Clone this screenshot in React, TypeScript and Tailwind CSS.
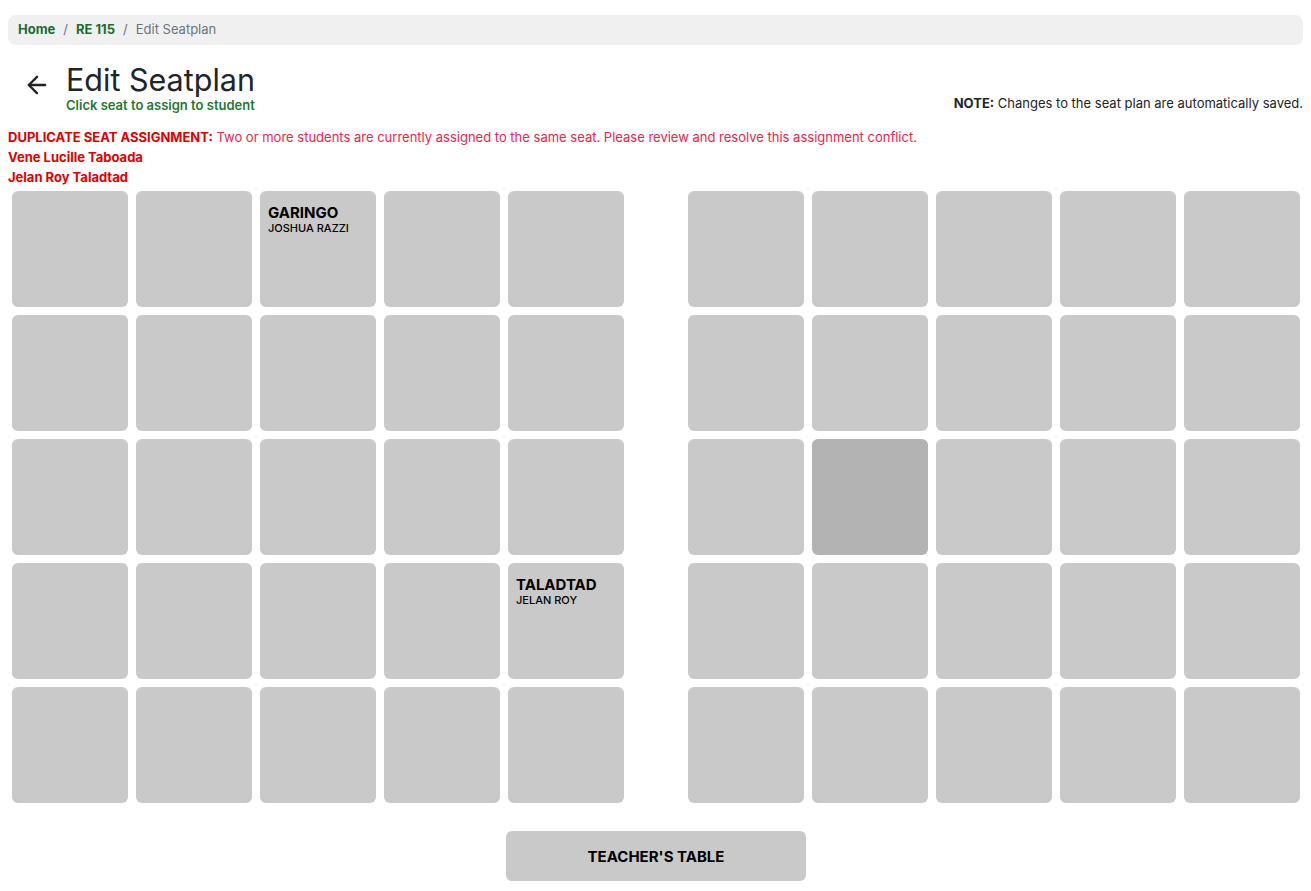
import { ArrowLeft } from "lucide-react";

type Seat = { last: string; first: string } | null;

const leftSeats: Seat[][] = [
  [null, null, { last: "GARINGO", first: "JOSHUA RAZZI" }, null, null],
  [null, null, null, null, null],
  [null, null, null, null, null],
  [null, null, null, null, { last: "TALADTAD", first: "JELAN ROY" }],
  [null, null, null, null, null],
];

const rightSeats: Seat[][] = [
  [null, null, null, null, null],
  [null, null, null, null, null],
  [null, null, null, null, null],
  [null, null, null, null, null],
  [null, null, null, null, null],
];

function SeatBox({ seat, active }: { seat: Seat; active?: boolean }) {
  return (
    <div
      className={
        "w-[116px] h-[116px] rounded-md px-2 pt-[14px] " +
        (active ? "bg-[#b3b3b3]" : "bg-[#c9c9c9]")
      }
    >
      {seat && (
        <>
          <div className="text-[15px] leading-[16px] font-bold text-black">{seat.last}</div>
          <div className="text-[11px] leading-[14px] font-medium text-black">{seat.first}</div>
        </>
      )}
    </div>
  );
}

function SeatGroup({ rows, activeAt }: { rows: Seat[][]; activeAt?: [number, number] }) {
  return (
    <div className="grid grid-cols-5 gap-2">
      {rows.map((row, r) =>
        row.map((seat, c) => (
          <SeatBox
            key={r + "-" + c}
            seat={seat}
            active={activeAt ? activeAt[0] === r && activeAt[1] === c : false}
          />
        ))
      )}
    </div>
  );
}

export default function App() {
  return (
    <div className="min-h-screen bg-white px-2 pt-[15px] font-['Inter',sans-serif] text-[#212529]">
      <nav className="h-[30px] rounded-lg bg-[#f0f0f0] px-[10px] flex items-center text-[13px]">
        <span className="font-bold text-[#1e6b2e]">Home</span>
        <span className="mx-2 text-[#6c757d]">/</span>
        <span className="font-bold text-[#1e6b2e]">RE 115</span>
        <span className="mx-2 text-[#6c757d]">/</span>
        <span className="text-[#6c757d]">Edit Seatplan</span>
      </nav>

      <div className="flex items-end justify-between mt-[18px]">
        <div className="flex items-start">
          <ArrowLeft className="w-[28px] h-[28px] ml-[15px] mt-[8px] text-[#222]" strokeWidth={2} />
          <div className="ml-[15px]">
            <h1 className="text-[30.5px] leading-[34px] font-normal text-[#212529]">Edit Seatplan</h1>
            <div className="text-[13px] leading-[16px] font-semibold text-[#1e7a2e]">
              Click seat to assign to student
            </div>
          </div>
        </div>
        <div className="text-[13px] leading-[16px] text-[#212529] mb-[2px]">
          <span className="font-bold">NOTE:</span> Changes to the seat plan are automatically saved.
        </div>
      </div>

      <div className="mt-[14px] text-[13px] leading-[20px]">
        <div className="text-[#e8274b]">
          <span className="font-bold text-[#e00000]">DUPLICATE SEAT ASSIGNMENT:</span> Two or more students are
          currently assigned to the same seat. Please review and resolve this assignment conflict.
        </div>
        <div className="font-bold text-[#e00000]">Vene Lucille Taboada</div>
        <div className="font-bold text-[#e00000]">Jelan Roy Taladtad</div>
      </div>

      <div className="mt-[4px] flex justify-center gap-16 pl-[1px]">
        <SeatGroup rows={leftSeats} />
        <SeatGroup rows={rightSeats} activeAt={[2, 1]} />
      </div>

      <div className="mt-[28px] flex justify-center pl-[1px]">
        <div className="w-[300px] h-[50px] rounded-md bg-[#c9c9c9] flex items-center justify-center pt-[3px] text-[15px] font-bold text-black">
          TEACHER'S TABLE
        </div>
      </div>
    </div>
  );
}
